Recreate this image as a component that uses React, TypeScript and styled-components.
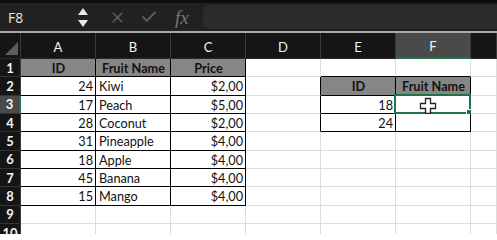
import styled, { createGlobalStyle } from "styled-components";
import { X, Check } from "lucide-react";

const GlobalStyle = createGlobalStyle`
  html, body {
    margin: 0;
    padding: 0;
    background: #ffffff;
    overflow: hidden;
  }
  body {
    font-family: Lato, "Open Sans", sans-serif;
  }
`;

// G is only partly in view: its letter sits past the window edge
const COLS = ["A", "B", "C", "D", "E", "F", "G"];
const VISIBLE_LABELS = ["A", "B", "C", "D", "E", "F"];
const ROWS = [1, 2, 3, 4, 5, 6, 7, 8, 9, 10];
const SELECTED_COL = "F";
const SELECTED_ROW = 3;

type Align = "left" | "right" | "center";
type CellData = { text: string; align: Align; head?: boolean };

const fruits: [number, string, string][] = [
  [24, "Kiwi", "$2,00"],
  [17, "Peach", "$5,00"],
  [28, "Coconut", "$2,00"],
  [31, "Pineapple", "$4,00"],
  [18, "Apple", "$4,00"],
  [45, "Banana", "$4,00"],
  [15, "Mango", "$4,00"],
];

const cells: Record<string, CellData> = {
  A1: { text: "ID", align: "center", head: true },
  B1: { text: "Fruit Name", align: "center", head: true },
  C1: { text: "Price", align: "center", head: true },
  E2: { text: "ID", align: "center", head: true },
  F2: { text: "Fruit Name", align: "center", head: true },
  E3: { text: "18", align: "right" },
  E4: { text: "24", align: "right" },
};
fruits.forEach(([id, name, price], i) => {
  const r = i + 2;
  cells[`A${r}`] = { text: String(id), align: "right" };
  cells[`B${r}`] = { text: name, align: "left" };
  cells[`C${r}`] = { text: price, align: "right" };
});

// bordered tables: [firstCol, lastCol, firstRow, lastRow]
const tables: [number, number, number, number][] = [
  [0, 2, 1, 8],
  [4, 5, 2, 4],
];

const inTable = (c: number, r: number) =>
  tables.some(([c0, c1, r0, r1]) => c >= c0 && c <= c1 && r >= r0 && r <= r1);

const GRID_LINE = "#dcdcdc";
const GREEN = "#217346";

const Sheet = styled.div`
  width: 497px;
  height: 234px;
  display: flex;
  flex-direction: column;
  overflow: hidden;
  background: #fff;
`;

const FormulaBar = styled.div`
  height: 33px;
  box-sizing: border-box;
  border-top: 3px solid #0d0d0d;
  border-bottom: 2px solid #a9a9a9;
  background: #222122;
  display: flex;
  align-items: center;
  flex-shrink: 0;
`;

const NameBox = styled.div`
  width: 77px;
  box-sizing: border-box;
  padding-left: 8px;
  color: #e4e4e4;
  font-family: "Open Sans", sans-serif;
  font-size: 14px;
`;

const Stepper = styled.div`
  width: 12px;
  display: flex;
  flex-direction: column;
  gap: 5px;
  align-items: center;
  margin-right: 12px;
`;

const Tri = styled.div<{ $down?: boolean }>`
  width: 0;
  height: 0;
  border-left: 5px solid transparent;
  border-right: 5px solid transparent;
  ${({ $down }) =>
    $down ? "border-top: 7px solid #e8e8e8;" : "border-bottom: 7px solid #e8e8e8;"}
`;

const ToolIcon = styled.div`
  width: 32px;
  display: flex;
  justify-content: center;
  color: #5b5b5b;
`;

const Fx = styled.div`
  width: 38px;
  box-sizing: border-box;
  padding-left: 10px;
  color: #767676;
  font-family: "Liberation Serif", serif;
  font-style: italic;
  font-size: 19px;
  line-height: 1;
`;

const FormulaInput = styled.div`
  flex: 1;
  height: 24px;
  background: #2c2b2c;
  border-radius: 7px 0 0 7px;
`;

const Grid = styled.div`
  display: grid;
  grid-template-columns: 21px repeat(6, 75px) 1fr;
  grid-template-rows: 26px;
  grid-auto-rows: 18.33px;
`;

const Corner = styled.div`
  background: #161516;
  border-right: 1px solid #3a3a3a;
  border-bottom: 1px solid #2a2a2a;
  box-sizing: border-box;
  display: flex;
  align-items: flex-end;
  justify-content: flex-end;
  padding: 0 2px 3px 0;
`;

const ColHead = styled.div<{ $active: boolean }>`
  box-sizing: border-box;
  background: ${({ $active }) => ($active ? "#4b4a4b" : "#161516")};
  border-right: 1px solid #3a3a3a;
  border-bottom: ${({ $active }) => ($active ? `2px solid ${GREEN}` : "1px solid #2a2a2a")};
  color: #f2f2f2;
  font-size: 13px;
  display: flex;
  align-items: center;
  justify-content: center;
  padding-top: 2px;
`;

const RowHead = styled.div<{ $active: boolean }>`
  box-sizing: border-box;
  background: ${({ $active }) => ($active ? "#4b4a4b" : "#161516")};
  border-right: ${({ $active }) => ($active ? `2px solid ${GREEN}` : "1px solid #3a3a3a")};
  border-bottom: 1px solid #333;
  color: #f4f4f4;
  font-size: 13px;
  font-weight: 700;
  display: flex;
  align-items: center;
  justify-content: center;
`;

const Cell = styled.div<{ $align: Align; $head?: boolean; $right: string; $bottom: string }>`
  position: relative;
  box-sizing: border-box;
  background: ${({ $head }) => ($head ? "#878687" : "#fff")};
  border-right: 1px solid ${({ $right }) => $right};
  border-bottom: 1px solid ${({ $bottom }) => $bottom};
  color: #121212;
  font-size: 12.7px;
  font-weight: ${({ $head }) => ($head ? 700 : 400)};
  display: flex;
  align-items: center;
  justify-content: ${({ $align }) =>
    $align === "right" ? "flex-end" : $align === "center" ? "center" : "flex-start"};
  padding: 1px 2px 0 3px;
  white-space: nowrap;
`;

const Selection = styled.div`
  position: absolute;
  top: -2px;
  left: -2px;
  right: -1px;
  bottom: -1px;
  border: 2px solid ${GREEN};
  pointer-events: none;
`;

const FillHandle = styled.div`
  position: absolute;
  right: -4px;
  bottom: -4px;
  width: 5px;
  height: 5px;
  background: ${GREEN};
  border: 1px solid #fff;
`;

const Cursor = styled.svg`
  position: absolute;
  left: 23px;
  top: 1px;
`;

const CornerTriangle = () => (
  <svg width="13" height="13" viewBox="0 0 13 13">
    <polygon points="13,0 13,13 0,13" fill="#5e5d5e" />
  </svg>
);

const PlusCursor = () => (
  <Cursor width="18" height="18" viewBox="0 0 18 18">
    <path
      d="M6.5 1.5h5v5h5v5h-5v5h-5v-5h-5v-5h5z"
      fill="#fff"
      stroke="#222"
      strokeWidth="1.3"
    />
  </Cursor>
);

export default function App() {
  return (
    <>
      <GlobalStyle />
      <Sheet>
        <FormulaBar>
          <NameBox>F8</NameBox>
          <Stepper>
            <Tri />
            <Tri $down />
          </Stepper>
          <ToolIcon>
            <X size={17} strokeWidth={2.4} />
          </ToolIcon>
          <ToolIcon>
            <Check size={18} strokeWidth={2.6} />
          </ToolIcon>
          <Fx>fx</Fx>
          <FormulaInput />
        </FormulaBar>
        <Grid>
          <Corner>
            <CornerTriangle />
          </Corner>
          {COLS.map((c) => (
            <ColHead key={c} $active={c === SELECTED_COL}>
              {VISIBLE_LABELS.includes(c) ? c : null}
            </ColHead>
          ))}
          {ROWS.map((r) => (
            <Row key={r} r={r} />
          ))}
        </Grid>
      </Sheet>
    </>
  );
}

function Row({ r }: { r: number }) {
  return (
    <>
      <RowHead $active={r === SELECTED_ROW}>{r}</RowHead>
      {COLS.map((c, ci) => {
        const data = cells[`${c}${r}`];
        const here = inTable(ci, r);
        const right = here || inTable(ci + 1, r) ? "#000" : GRID_LINE;
        const bottom = here || inTable(ci, r + 1) ? "#000" : GRID_LINE;
        const selected = c === SELECTED_COL && r === SELECTED_ROW;
        return (
          <Cell
            key={c}
            $align={data?.align ?? "left"}
            $head={data?.head}
            $right={right}
            $bottom={bottom}
          >
            {data?.text}
            {selected && (
              <>
                <Selection>
                  <FillHandle />
                </Selection>
                <PlusCursor />
              </>
            )}
          </Cell>
        );
      })}
    </>
  );
}
